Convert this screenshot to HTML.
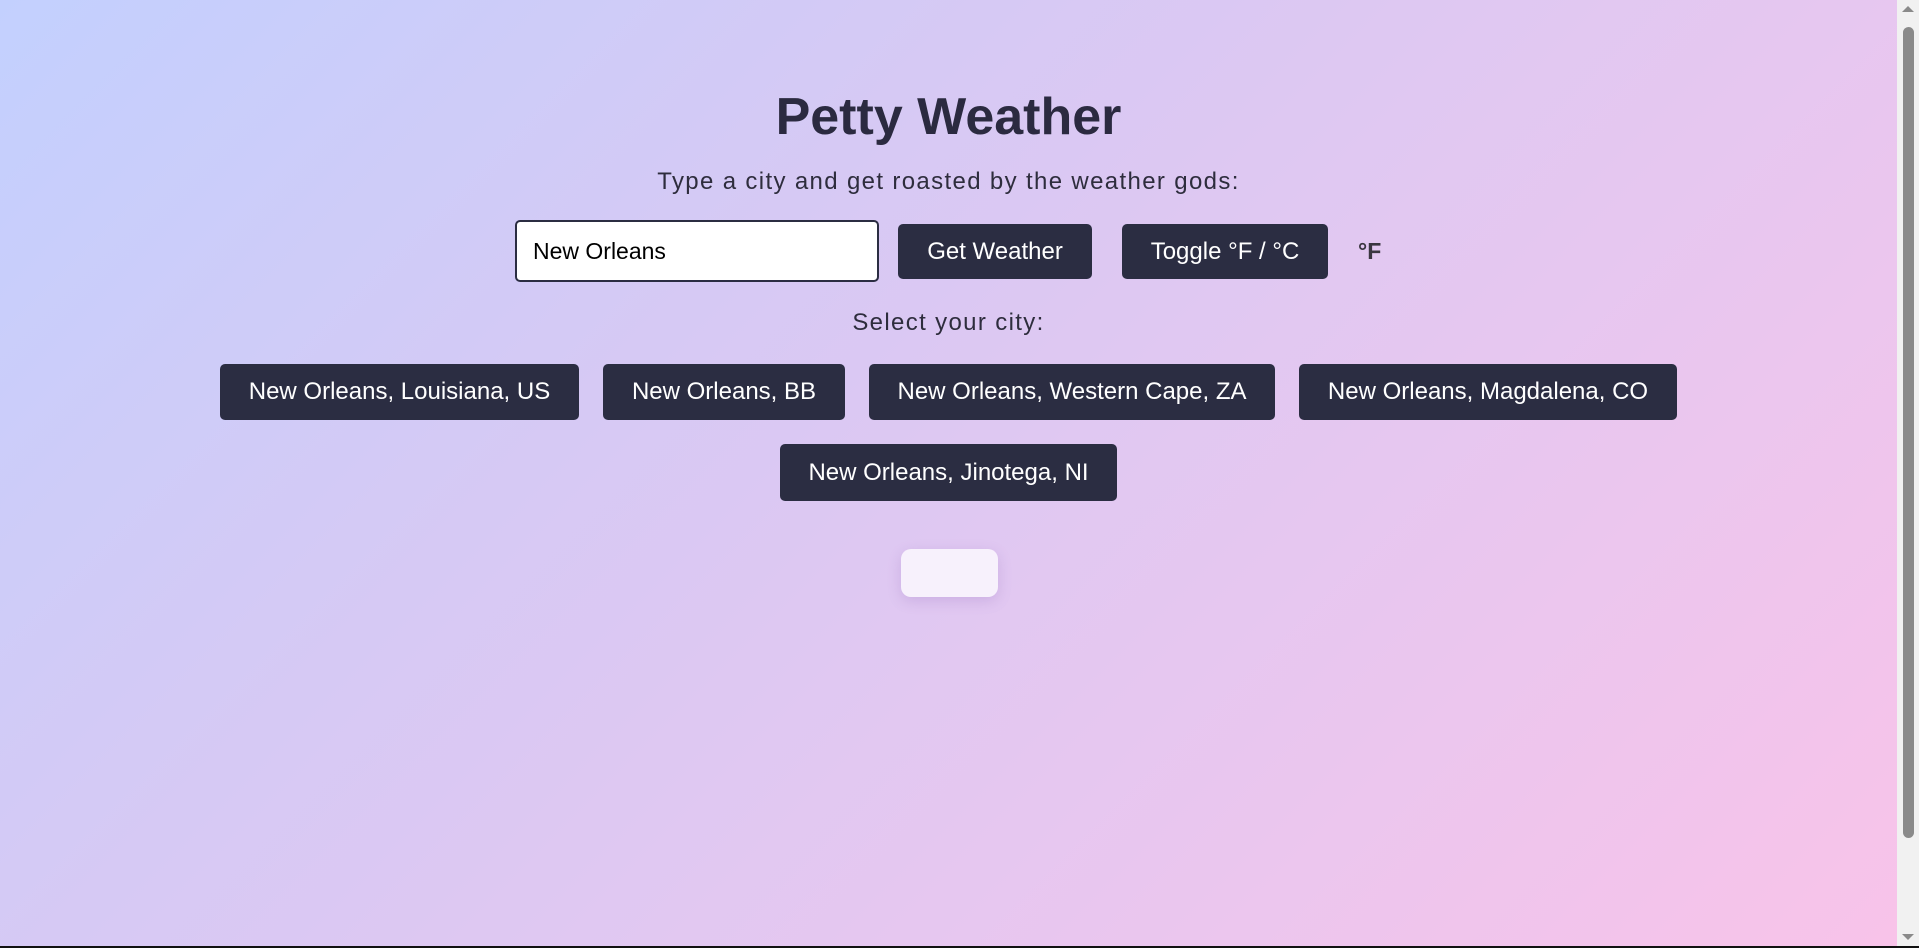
<!DOCTYPE html>
<html><head><meta charset="utf-8"><style>
html,body{margin:0;padding:0;}
body{width:1919px;height:948px;overflow:hidden;position:relative;font-family:"Liberation Sans",sans-serif;}
.bg{position:absolute;left:0;top:0;width:1897px;height:946px;background:linear-gradient(135deg,#c3d0fe 0%,#d6c9f4 35%,#e6c7f0 65%,#f8c3e9 100%);}
.sb{position:absolute;left:1897px;top:0;width:22px;height:946px;background:#f1f1f1;}
.thumb{position:absolute;left:1903px;top:27px;width:11px;height:811px;background:#8a8a8a;border-radius:6px;}
.line{position:absolute;left:0;top:946px;width:1919px;height:2px;background:#111;}
.abs{position:absolute;}
h1{position:absolute;left:0;width:1897px;top:87px;margin:0;text-align:center;font-size:52px;font-weight:bold;color:#2b2a40;}
.sub{position:absolute;left:0;width:1897px;text-align:center;color:#2e2d3d;font-size:24px;letter-spacing:1.35px;}
.btn{position:absolute;background:#2b2d42;color:#fff;border-radius:5px;font-size:24px;display:flex;align-items:center;justify-content:center;}
.inp{position:absolute;left:515px;top:220px;border:2px solid #2b2d42;border-radius:5px;background:#fff;font-size:23px;line-height:58px;padding-left:16px;box-sizing:border-box;width:364px;height:62px;}
</style></head><body>
<div class="bg"></div>
<h1>Petty Weather</h1>
<div class="sub" style="top:168px">Type a city and get roasted by the weather gods:</div>
<div class="inp">New Orleans</div>
<div class="btn" style="left:898px;top:224px;width:194px;height:55px">Get Weather</div>
<div class="btn" style="left:1122px;top:224px;width:206px;height:55px">Toggle °F / °C</div>
<div class="abs" style="left:1358px;top:238px;font-size:23px;font-weight:bold;color:#3a3640">°F</div>
<div class="sub" style="top:309px">Select your city:</div>
<div class="btn" style="left:220px;top:364px;width:359px;height:56px">New Orleans, Louisiana, US</div>
<div class="btn" style="left:603px;top:364px;width:242px;height:56px">New Orleans, BB</div>
<div class="btn" style="left:869px;top:364px;width:406px;height:56px">New Orleans, Western Cape, ZA</div>
<div class="btn" style="left:1299px;top:364px;width:378px;height:56px">New Orleans, Magdalena, CO</div>
<div class="btn" style="left:780px;top:444px;width:337px;height:57px">New Orleans, Jinotega, NI</div>
<div class="abs" style="left:901px;top:549px;width:97px;height:48px;border-radius:10px;background:#f7f1fc;box-shadow:0 4px 14px rgba(120,80,170,.2)"></div>
<div class="sb"></div>
<div class="thumb"></div>
<div class="abs" style="left:1902px;top:6px;width:0;height:0;border-left:6px solid transparent;border-right:6px solid transparent;border-bottom:6px solid #8a8a8a"></div>
<div class="abs" style="left:1902px;top:934px;width:0;height:0;border-left:6px solid transparent;border-right:6px solid transparent;border-top:6px solid #8a8a8a"></div>
<div class="line"></div>
</body></html>
